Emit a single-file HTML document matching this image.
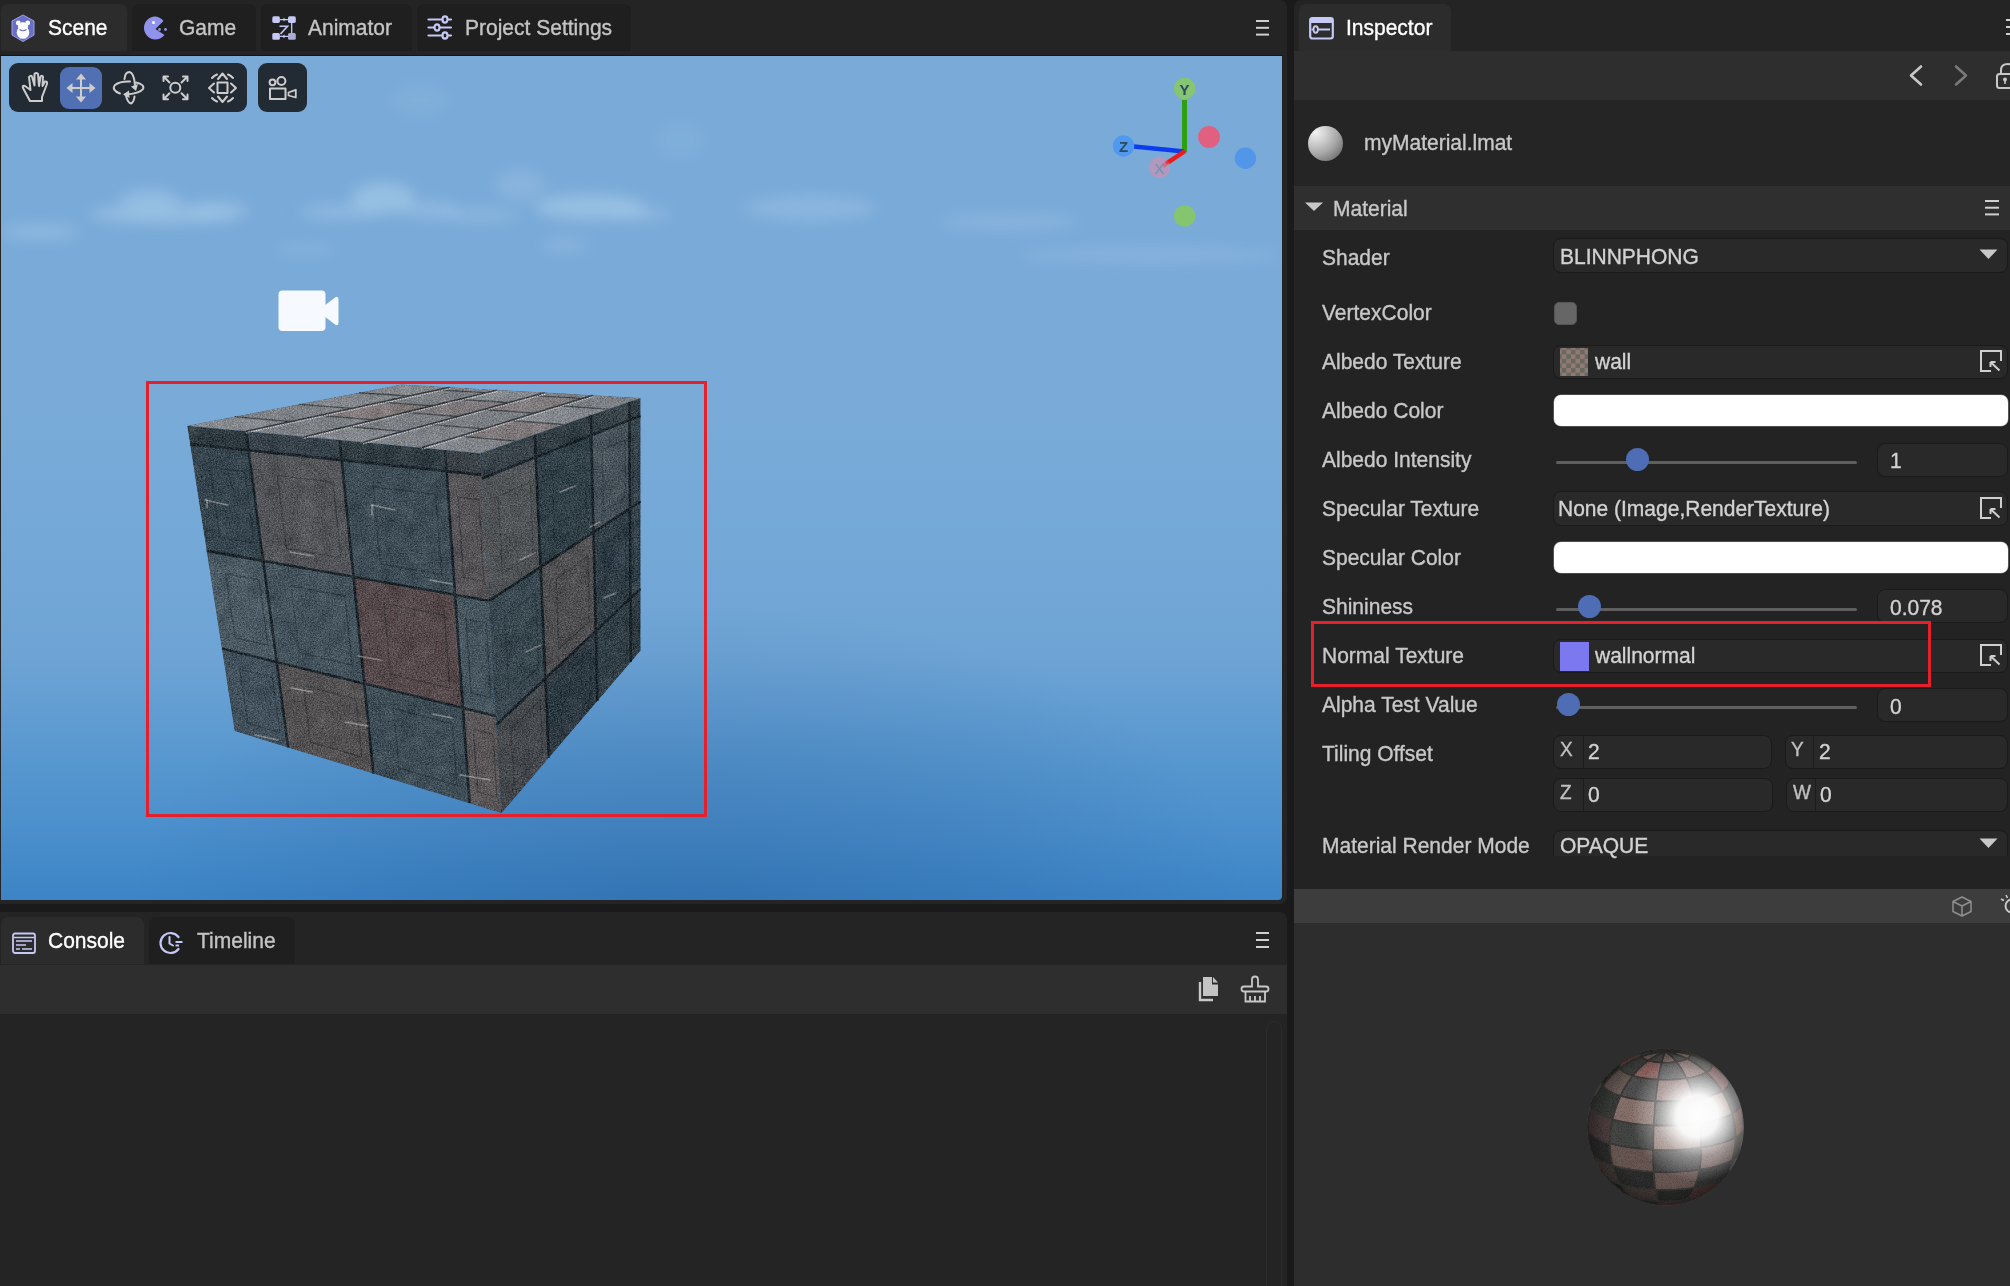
<!DOCTYPE html>
<html><head><meta charset="utf-8">
<style>
*{box-sizing:border-box}
html,body{margin:0;padding:0}
body{width:2010px;height:1286px;background:#1a1a1a;position:relative;overflow:hidden;font-family:"Liberation Sans",sans-serif;font-size:21px;color:#c8c8c8;-webkit-text-stroke:0.35px currentColor}
.abs{position:absolute}
.t,.tx{will-change:transform;transform:scaleY(1.06);transform-origin:0 19.3px}
.panel{position:absolute;background:#242424;overflow:hidden}
.tab{position:absolute;top:4px;height:47px;background:#1f1f1f;border-radius:7px 7px 0 0;color:#c4c4c4;font-size:21px;line-height:47px;white-space:nowrap}
.tab.on{background:#2c2c2c;color:#fff}
.tab .tx{position:absolute;top:-1px}
.ic{position:absolute}
.lbl{position:absolute;left:28px;font-size:21px;color:#c8c8c8;line-height:24px;white-space:nowrap}
.t{position:absolute;font-size:21px;line-height:24px;white-space:nowrap;color:#c8c8c8}
.f{position:absolute;background:#292929;border:1px solid #1a1a1a;border-radius:8px}
.tex{background:repeating-conic-gradient(#927a72 0 25%,#666862 0 50%) 1.7px 1.7px/9.2px 9.2px}
.ntex{background:#7b78f0}
</style></head>
<body>

<!-- TOP LEFT PANEL -->
<div class="panel" style="left:0;top:0;width:1287px;height:904px;border-radius:0 7px 7px 0">
  <div class="tab on" style="left:1px;width:126px"><span class="tx" style="left:47px">Scene</span></div>
  <div class="tab" style="left:132px;width:124px"><span class="tx" style="left:47.2px">Game</span></div>
  <div class="tab" style="left:261px;width:151px"><span class="tx" style="left:47px">Animator</span></div>
  <div class="tab" style="left:417px;width:214px"><span class="tx" style="left:48px">Project Settings</span></div>
  <div class="abs" style="left:0;top:55px;width:1283px;height:1px;background:#151515"></div>
  <!-- viewport -->
  <div id="vp" class="abs" style="left:1px;top:56px;width:1281px;height:844px;overflow:hidden;border-radius:0 0 4px 0;background:radial-gradient(ellipse 560px 300px at 690px 850px,rgba(30,80,140,0.32),rgba(30,80,140,0.18) 50%,rgba(30,80,140,0) 100%),linear-gradient(180deg,#7aabd8 0px,#7aabd8 340px,#74a8d7 480px,#6ea4d5 598px,#5797cf 706px,#4a8fcc 777px,#3c84c6 844px)">
  </div>
<!--VP-->
<svg class="abs" style="left:0;top:0" width="1287" height="904" viewBox="0 0 1287 904">
<defs>
 <clipPath id="vpc"><rect x="1" y="56" width="1281" height="844" rx="0"/></clipPath>
 <filter id="blur6" x="-50%" y="-50%" width="200%" height="200%"><feGaussianBlur stdDeviation="7"/></filter>
 <filter id="blur3" x="-50%" y="-50%" width="200%" height="200%"><feGaussianBlur stdDeviation="3"/></filter>
 <filter id="noise" x="0" y="0" width="100%" height="100%" color-interpolation-filters="sRGB">
   <feTurbulence type="fractalNoise" baseFrequency="0.75" numOctaves="2" seed="4" result="n1"/>
   <feTurbulence type="fractalNoise" baseFrequency="0.06" numOctaves="3" seed="9" result="n2"/>
   <feComposite in="n1" in2="n2" operator="arithmetic" k2="0.8" k3="0.2" result="n"/>
   <feColorMatrix in="n" type="matrix" values="1 0 0 0 0  1 0 0 0 0  1 0 0 0 0  0 0 0 0 1" result="g"/>
   <feComposite in="SourceGraphic" in2="g" operator="arithmetic" k2="1" k3="0.5" k4="-0.25" result="m"/>
   <feComposite in="m" in2="SourceAlpha" operator="in"/>
 </filter>
 <linearGradient id="rshade" x1="0" y1="0" x2="0.3" y2="1">
   <stop offset="0" stop-color="#000" stop-opacity="0"/>
   <stop offset="1" stop-color="#000" stop-opacity="0.12"/>
 </linearGradient>
 <radialGradient id="botdark" cx="0.45" cy="1.05" r="0.6">
   <stop offset="0" stop-color="#2f6fae" stop-opacity="0.55"/>
   <stop offset="1" stop-color="#2f6fae" stop-opacity="0"/>
 </radialGradient>
 <radialGradient id="rlight" cx="0.5" cy="0.5" r="0.5">
   <stop offset="0" stop-color="#8cbbe6" stop-opacity="0.45"/>
   <stop offset="1" stop-color="#8cbbe6" stop-opacity="0"/>
 </radialGradient>
</defs>
<g clip-path="url(#vpc)">
 
 
 <g fill="#a9cbea" filter="url(#blur6)">
  <ellipse cx="165" cy="214" rx="75" ry="10" opacity="0.55"/>
  <ellipse cx="150" cy="200" rx="30" ry="12" opacity="0.45"/>
  <ellipse cx="220" cy="210" rx="30" ry="10" opacity="0.35"/>
  <ellipse cx="383" cy="198" rx="32" ry="16" opacity="0.6"/>
  <ellipse cx="340" cy="212" rx="40" ry="8" opacity="0.4"/>
  <ellipse cx="430" cy="210" rx="30" ry="9" opacity="0.4"/>
  <ellipse cx="520" cy="185" rx="25" ry="16" opacity="0.3"/>
  <ellipse cx="590" cy="207" rx="55" ry="13" opacity="0.6"/>
  <ellipse cx="640" cy="214" rx="30" ry="7" opacity="0.4"/>
  <ellipse cx="480" cy="215" rx="40" ry="7" opacity="0.35"/>
  <ellipse cx="565" cy="245" rx="22" ry="8" opacity="0.3"/>
  <ellipse cx="305" cy="250" rx="30" ry="5" opacity="0.3"/>
  <ellipse cx="420" cy="100" rx="30" ry="16" opacity="0.12"/>
  <ellipse cx="680" cy="140" rx="26" ry="20" opacity="0.1"/>
  <ellipse cx="810" cy="208" rx="65" ry="13" opacity="0.35"/>
  <ellipse cx="1010" cy="222" rx="70" ry="8" opacity="0.3"/>
  <ellipse cx="1150" cy="255" rx="130" ry="7" opacity="0.3"/>
  <ellipse cx="40" cy="232" rx="40" ry="8" opacity="0.4"/>
  </g>
 <!-- cube -->
 <g filter="url(#noise)">
<polygon points="187.3,425.8 245.9,431.3 248.4,450.3 190.1,444.1" fill="#303b42"/>
<polygon points="245.9,431.3 339.7,440.1 341.7,460.1 248.4,450.3" fill="#37424a"/>
<polygon points="339.7,440.1 445.1,450.0 446.6,471.2 341.7,460.1" fill="#303b42"/>
<polygon points="445.1,450.0 480.3,453.3 481.6,474.9 446.6,471.2" fill="#3a4247"/>
<polygon points="190.1,444.1 248.4,450.3 263.2,560.9 206.7,550.9" fill="#35444d"/>
<polygon points="248.4,450.3 341.7,460.1 353.5,576.9 263.2,560.9" fill="#535457"/>
<polygon points="341.7,460.1 446.6,471.2 455.1,594.8 353.5,576.9" fill="#3e4c55"/>
<polygon points="446.6,471.2 481.6,474.9 489.0,600.8 455.1,594.8" fill="#565457"/>
<polygon points="206.7,550.9 263.2,560.9 276.7,662.1 221.9,648.6" fill="#4b5a63"/>
<polygon points="263.2,560.9 353.5,576.9 364.3,683.6 276.7,662.1" fill="#43525b"/>
<polygon points="353.5,576.9 455.1,594.8 462.9,707.8 364.3,683.6" fill="#56494b"/>
<polygon points="455.1,594.8 489.0,600.8 495.8,715.9 462.9,707.8" fill="#45545d"/>
<polygon points="221.9,648.6 276.7,662.1 288.1,747.4 234.7,731.0" fill="#41505a"/>
<polygon points="276.7,662.1 364.3,683.6 373.4,773.6 288.1,747.4" fill="#545153"/>
<polygon points="364.3,683.6 462.9,707.8 469.5,803.2 373.4,773.6" fill="#3e4d56"/>
<polygon points="462.9,707.8 495.8,715.9 501.5,813.0 469.5,803.2" fill="#5a5557"/>
<line x1="245.9" y1="431.3" x2="288.1" y2="747.4" stroke="#1c262c" stroke-width="2.6"/>
<line x1="339.7" y1="440.1" x2="373.4" y2="773.6" stroke="#1c262c" stroke-width="2.6"/>
<line x1="445.1" y1="450.0" x2="469.5" y2="803.2" stroke="#1c262c" stroke-width="2.6"/>
<line x1="190.1" y1="444.1" x2="481.6" y2="474.9" stroke="#1c262c" stroke-width="2.6"/>
<line x1="206.7" y1="550.9" x2="489.0" y2="600.8" stroke="#1c262c" stroke-width="2.6"/>
<line x1="221.9" y1="648.6" x2="495.8" y2="715.9" stroke="#1c262c" stroke-width="2.6"/>
<polygon points="480.3,453.3 534.8,434.5 535.7,457.1 481.8,478.5" fill="#3a444b"/>
<polygon points="534.8,434.5 590.8,415.1 591.3,435.1 535.7,457.1" fill="#343f46"/>
<polygon points="590.8,415.1 629.3,401.9 629.4,420.1 591.3,435.1" fill="#39434a"/>
<polygon points="629.3,401.9 640.5,398.0 640.5,415.7 629.4,420.1" fill="#343f46"/>
<polygon points="481.8,478.5 535.7,457.1 540.5,567.0 489.0,600.8" fill="#535659"/>
<polygon points="535.7,457.1 591.3,435.1 593.5,532.3 540.5,567.0" fill="#34434b"/>
<polygon points="591.3,435.1 629.4,420.1 629.9,508.5 593.5,532.3" fill="#4a555d"/>
<polygon points="629.4,420.1 640.5,415.7 640.5,501.5 629.9,508.5" fill="#39474f"/>
<polygon points="489.0,600.8 540.5,567.0 545.3,678.6 496.3,724.9" fill="#3d4c55"/>
<polygon points="540.5,567.0 593.5,532.3 595.8,630.9 545.3,678.6" fill="#555456"/>
<polygon points="593.5,532.3 629.9,508.5 630.4,598.2 595.8,630.9" fill="#34424b"/>
<polygon points="629.9,508.5 640.5,501.5 640.5,588.6 630.4,598.2" fill="#3a4851"/>
<polygon points="496.3,724.9 545.3,678.6 548.8,757.8 501.5,813.0" fill="#4d5156"/>
<polygon points="545.3,678.6 595.8,630.9 597.4,700.9 548.8,757.8" fill="#323f48"/>
<polygon points="595.8,630.9 630.4,598.2 630.8,661.9 597.4,700.9" fill="#38464e"/>
<polygon points="630.4,598.2 640.5,588.6 640.5,650.5 630.8,661.9" fill="#364249"/>
<line x1="534.8" y1="434.5" x2="548.8" y2="757.8" stroke="#1c262c" stroke-width="2.6"/>
<line x1="590.8" y1="415.1" x2="597.4" y2="700.9" stroke="#1c262c" stroke-width="2.6"/>
<line x1="629.3" y1="401.9" x2="630.8" y2="661.9" stroke="#1c262c" stroke-width="2.6"/>
<line x1="481.8" y1="478.5" x2="640.5" y2="415.7" stroke="#1c262c" stroke-width="2.6"/>
<line x1="489.0" y1="600.8" x2="640.5" y2="501.5" stroke="#1c262c" stroke-width="2.6"/>
<line x1="496.3" y1="724.9" x2="640.5" y2="588.6" stroke="#1c262c" stroke-width="2.6"/>
<polygon points="209.7,467.4 244.4,471.6 254.2,543.2 220.1,537.5" fill="none" stroke="#1e282d" stroke-width="1.2" opacity="0.45"/>
<polygon points="277.3,475.5 332.9,482.1 340.8,557.5 286.4,548.5" fill="none" stroke="#1e282d" stroke-width="1.2" opacity="0.45"/>
<polygon points="373.2,486.9 435.8,494.4 441.6,574.2 380.3,564.1" fill="none" stroke="#1e282d" stroke-width="1.2" opacity="0.45"/>
<polygon points="458.0,497.1 478.9,499.6 483.8,581.2 463.4,577.8" fill="none" stroke="#1e282d" stroke-width="1.2" opacity="0.45"/>
<polygon points="225.5,573.5 259.1,579.9 268.0,645.3 235.0,637.6" fill="none" stroke="#1e282d" stroke-width="1.2" opacity="0.45"/>
<polygon points="291.0,585.9 344.9,596.1 352.1,665.1 299.3,652.7" fill="none" stroke="#1e282d" stroke-width="1.2" opacity="0.45"/>
<polygon points="384.0,603.6 444.6,615.1 449.9,688.1 390.4,674.1" fill="none" stroke="#1e282d" stroke-width="1.2" opacity="0.45"/>
<polygon points="466.1,619.2 486.3,623.0 490.8,697.7 471.0,693.0" fill="none" stroke="#1e282d" stroke-width="1.2" opacity="0.45"/>
<polygon points="239.7,669.0 272.4,677.4 279.9,732.7 247.8,723.1" fill="none" stroke="#1e282d" stroke-width="1.2" opacity="0.45"/>
<polygon points="303.4,685.4 355.7,698.9 361.8,757.1 310.4,741.7" fill="none" stroke="#1e282d" stroke-width="1.2" opacity="0.45"/>
<polygon points="393.6,708.7 452.5,723.8 456.9,785.4 399.1,768.2" fill="none" stroke="#1e282d" stroke-width="1.2" opacity="0.45"/>
<polygon points="473.4,729.2 493.0,734.3 496.8,797.3 477.5,791.5" fill="none" stroke="#1e282d" stroke-width="1.2" opacity="0.45"/>
<polygon points="498.2,496.3 530.3,482.0 533.6,554.4 502.4,573.5" fill="none" stroke="#1e282d" stroke-width="1.2" opacity="0.35"/>
<polygon points="552.1,472.2 585.1,457.5 586.8,521.7 554.7,541.4" fill="none" stroke="#1e282d" stroke-width="1.2" opacity="0.35"/>
<polygon points="602.3,449.9 625.0,439.8 625.4,497.9 603.5,511.4" fill="none" stroke="#1e282d" stroke-width="1.2" opacity="0.35"/>
<polygon points="632.6,436.4 639.2,433.4 639.2,489.4 632.8,493.4" fill="none" stroke="#1e282d" stroke-width="1.2" opacity="0.35"/>
<polygon points="504.7,615.4 535.3,593.7 538.7,667.2 509.0,693.8" fill="none" stroke="#1e282d" stroke-width="1.2" opacity="0.35"/>
<polygon points="556.2,578.9 587.7,556.5 589.4,621.6 558.8,649.0" fill="none" stroke="#1e282d" stroke-width="1.2" opacity="0.35"/>
<polygon points="604.1,544.8 625.7,529.5 626.1,588.5 605.2,607.3" fill="none" stroke="#1e282d" stroke-width="1.2" opacity="0.35"/>
<polygon points="632.9,524.3 639.2,519.8 639.3,576.7 633.2,582.2" fill="none" stroke="#1e282d" stroke-width="1.2" opacity="0.35"/>
<polygon points="511.0,729.0 540.2,700.2 542.5,752.3 514.0,784.7" fill="none" stroke="#1e282d" stroke-width="1.2" opacity="0.35"/>
<polygon points="560.0,680.5 590.1,650.8 591.3,697.0 561.9,730.3" fill="none" stroke="#1e282d" stroke-width="1.2" opacity="0.35"/>
<polygon points="605.7,635.4 626.4,615.0 626.7,656.9 606.6,679.7" fill="none" stroke="#1e282d" stroke-width="1.2" opacity="0.35"/>
<polygon points="633.3,608.1 639.3,602.2 639.3,642.6 633.5,649.2" fill="none" stroke="#1e282d" stroke-width="1.2" opacity="0.35"/>
<polygon points="187.3,425.8 234.5,416.7 290.7,421.6 245.9,431.3" fill="#83878b"/>
<polygon points="234.5,416.7 298.9,404.3 351.9,408.4 290.7,421.6" fill="#7d8186"/>
<polygon points="298.9,404.3 359.1,392.8 408.9,396.0 351.9,408.4" fill="#83878b"/>
<polygon points="359.1,392.8 402.0,384.5 449.7,387.2 408.9,396.0" fill="#83878b"/>
<line x1="234.5" y1="416.7" x2="290.7" y2="421.6" stroke="#454a4e" stroke-width="1.3"/>
<line x1="298.9" y1="404.3" x2="351.9" y2="408.4" stroke="#454a4e" stroke-width="1.3"/>
<line x1="359.1" y1="392.8" x2="408.9" y2="396.0" stroke="#454a4e" stroke-width="1.3"/>
<polygon points="245.9,431.3 319.3,415.4 373.9,419.9 304.5,436.8" fill="#7d8186"/>
<polygon points="319.3,415.4 380.4,402.2 431.8,405.8 373.9,419.9" fill="#82797b"/>
<polygon points="380.4,402.2 437.5,389.8 485.8,392.7 431.8,405.8" fill="#7b7f84"/>
<polygon points="437.5,389.8 449.7,387.2 497.4,389.9 485.8,392.7" fill="#7d8186"/>
<line x1="319.3" y1="415.4" x2="373.9" y2="419.9" stroke="#454a4e" stroke-width="1.3"/>
<line x1="380.4" y1="402.2" x2="431.8" y2="405.8" stroke="#454a4e" stroke-width="1.3"/>
<line x1="437.5" y1="389.8" x2="485.8" y2="392.7" stroke="#454a4e" stroke-width="1.3"/>
<polygon points="304.5,436.8 346.9,426.5 403.1,431.4 363.1,442.3" fill="#83878b"/>
<polygon points="346.9,426.5 404.8,412.4 457.7,416.5 403.1,431.4" fill="#7b7f84"/>
<polygon points="404.8,412.4 458.8,399.3 508.7,402.5 457.7,416.5" fill="#7f7a7c"/>
<polygon points="458.8,399.3 497.4,389.9 545.1,392.6 508.7,402.5" fill="#83878b"/>
<line x1="346.9" y1="426.5" x2="403.1" y2="431.4" stroke="#454a4e" stroke-width="1.3"/>
<line x1="404.8" y1="412.4" x2="457.7" y2="416.5" stroke="#454a4e" stroke-width="1.3"/>
<line x1="458.8" y1="399.3" x2="508.7" y2="402.5" stroke="#454a4e" stroke-width="1.3"/>
<polygon points="363.1,442.3 428.6,424.4 483.3,428.9 421.7,447.8" fill="#7e8287"/>
<polygon points="428.6,424.4 483.2,409.5 534.6,413.2 483.3,428.9" fill="#7b7f84"/>
<polygon points="483.2,409.5 534.2,395.6 582.5,398.4 534.6,413.2" fill="#7f7a7c"/>
<polygon points="534.2,395.6 545.1,392.6 592.8,395.3 582.5,398.4" fill="#7d8186"/>
<line x1="428.6" y1="424.4" x2="483.3" y2="428.9" stroke="#454a4e" stroke-width="1.3"/>
<line x1="483.2" y1="409.5" x2="534.6" y2="413.2" stroke="#454a4e" stroke-width="1.3"/>
<line x1="534.2" y1="395.6" x2="582.5" y2="398.4" stroke="#454a4e" stroke-width="1.3"/>
<polygon points="421.7,447.8 459.3,436.2 515.5,441.1 480.3,453.3" fill="#81858a"/>
<polygon points="459.3,436.2 510.7,420.5 563.6,424.5 515.5,441.1" fill="#7f787a"/>
<polygon points="510.7,420.5 558.6,405.8 608.5,409.1 563.6,424.5" fill="#83878b"/>
<polygon points="558.6,405.8 592.8,395.3 640.5,398.0 608.5,409.1" fill="#7b7f84"/>
<line x1="459.3" y1="436.2" x2="515.5" y2="441.1" stroke="#454a4e" stroke-width="1.3"/>
<line x1="510.7" y1="420.5" x2="563.6" y2="424.5" stroke="#454a4e" stroke-width="1.3"/>
<line x1="558.6" y1="405.8" x2="608.5" y2="409.1" stroke="#454a4e" stroke-width="1.3"/>
<line x1="245.9" y1="431.3" x2="449.7" y2="387.2" stroke="#343a3e" stroke-width="1.5"/>
<line x1="245.9" y1="431.3" x2="449.7" y2="387.2" stroke="#e6e6e8" stroke-width="1.2" opacity="0.7" stroke-dasharray="1.5 1" transform="translate(0,1.5)"/>
<line x1="304.5" y1="436.8" x2="497.4" y2="389.9" stroke="#343a3e" stroke-width="1.5"/>
<line x1="304.5" y1="436.8" x2="497.4" y2="389.9" stroke="#e6e6e8" stroke-width="1.2" opacity="0.7" stroke-dasharray="1.5 1" transform="translate(0,1.5)"/>
<line x1="363.1" y1="442.3" x2="545.1" y2="392.6" stroke="#343a3e" stroke-width="1.5"/>
<line x1="363.1" y1="442.3" x2="545.1" y2="392.6" stroke="#e6e6e8" stroke-width="1.2" opacity="0.7" stroke-dasharray="1.5 1" transform="translate(0,1.5)"/>
<line x1="421.7" y1="447.8" x2="592.8" y2="395.3" stroke="#343a3e" stroke-width="1.5"/>
<line x1="421.7" y1="447.8" x2="592.8" y2="395.3" stroke="#e6e6e8" stroke-width="1.2" opacity="0.7" stroke-dasharray="1.5 1" transform="translate(0,1.5)"/>
<line x1="205" y1="500" x2="228" y2="505" stroke="#e8e0dc" stroke-width="1.6" stroke-linecap="round" opacity="0.4"/>
<line x1="207" y1="500" x2="207" y2="508" stroke="#e8e0dc" stroke-width="1.6" stroke-linecap="round" opacity="0.4"/>
<line x1="290" y1="552" x2="313" y2="556" stroke="#e8e0dc" stroke-width="1.6" stroke-linecap="round" opacity="0.4"/>
<line x1="372" y1="505" x2="395" y2="510" stroke="#e8e0dc" stroke-width="1.6" stroke-linecap="round" opacity="0.4"/>
<line x1="372" y1="505" x2="372" y2="515" stroke="#e8e0dc" stroke-width="1.6" stroke-linecap="round" opacity="0.4"/>
<line x1="430" y1="580" x2="452" y2="584" stroke="#e8e0dc" stroke-width="1.6" stroke-linecap="round" opacity="0.4"/>
<line x1="255" y1="735" x2="278" y2="740" stroke="#e8e0dc" stroke-width="1.6" stroke-linecap="round" opacity="0.4"/>
<line x1="291" y1="688" x2="312" y2="692" stroke="#e8e0dc" stroke-width="1.6" stroke-linecap="round" opacity="0.4"/>
<line x1="345" y1="722" x2="368" y2="726" stroke="#e8e0dc" stroke-width="1.6" stroke-linecap="round" opacity="0.4"/>
<line x1="358" y1="656" x2="380" y2="660" stroke="#e8e0dc" stroke-width="1.6" stroke-linecap="round" opacity="0.4"/>
<line x1="432" y1="714" x2="452" y2="718" stroke="#e8e0dc" stroke-width="1.6" stroke-linecap="round" opacity="0.4"/>
<line x1="460" y1="775" x2="490" y2="780" stroke="#e8e0dc" stroke-width="1.6" stroke-linecap="round" opacity="0.4"/>
<line x1="560" y1="492" x2="575" y2="486" stroke="#e8e0dc" stroke-width="1.6" stroke-linecap="round" opacity="0.4"/>
<line x1="520" y1="560" x2="535" y2="553" stroke="#e8e0dc" stroke-width="1.6" stroke-linecap="round" opacity="0.4"/>
<line x1="526" y1="652" x2="541" y2="645" stroke="#e8e0dc" stroke-width="1.6" stroke-linecap="round" opacity="0.4"/>
<line x1="590" y1="527" x2="600" y2="522" stroke="#e8e0dc" stroke-width="1.6" stroke-linecap="round" opacity="0.4"/>
<line x1="604" y1="598" x2="616" y2="593" stroke="#e8e0dc" stroke-width="1.6" stroke-linecap="round" opacity="0.4"/>
<polygon points="480.3,453.3 640.5,398.0 640.5,650.5 501.5,813.0" fill="url(#rshade)"/>
 </g>
 <!-- camera -->
 <rect x="278.5" y="290.5" width="47" height="40.5" rx="4" fill="#f6f9ff"/>
 <path d="M324,306 L335,297.5 Q338.5,295.5 338.5,299.5 L338.5,322.5 Q338.5,326.5 335,324.5 L324,316 Z" fill="#f6f9ff"/>
 <!-- red selection rect -->
 <rect x="147.5" y="382.5" width="558" height="433" fill="none" stroke="#e3202c" stroke-width="3"/>
 <!-- gizmo -->
 <line x1="1184.5" y1="100" x2="1184.5" y2="152" stroke="#2ea010" stroke-width="5"/>
 <line x1="1134" y1="146.5" x2="1184" y2="151.5" stroke="#0b3cf0" stroke-width="4.5"/>
 <line x1="1163" y1="166" x2="1185" y2="151" stroke="#ee1c1c" stroke-width="4.5"/>
 <circle cx="1184.6" cy="88.5" r="10.7" fill="#86c572"/>
 <circle cx="1123.5" cy="146" r="10.7" fill="#4f99ef"/>
 <circle cx="1159.5" cy="167.5" r="10.7" fill="#c890b4" opacity="0.7"/>
 <circle cx="1209" cy="137" r="10.9" fill="#e2607f"/>
 <circle cx="1245.4" cy="158.3" r="10.7" fill="#5196e9"/>
 <circle cx="1184.6" cy="216" r="10.7" fill="#85c56d"/>
 <text x="1184.6" y="94.5" font-family="Liberation Sans" font-weight="bold" font-size="15" fill="#2d4a62" text-anchor="middle">Y</text>
 <text x="1123.5" y="152" font-family="Liberation Sans" font-weight="bold" font-size="15" fill="#2d4a62" text-anchor="middle">Z</text>
 <text x="1159.5" y="173.5" font-family="Liberation Sans" font-size="15" fill="#6f92aa" text-anchor="middle">X</text>
 <line x1="1166" y1="163" x2="1184" y2="151.5" stroke="#ee1c1c" stroke-width="3.5" opacity="0.6"/>
 <!-- toolbar -->
 <rect x="9" y="63" width="238" height="49" rx="9" fill="#222a34"/>
 <rect x="60" y="67" width="42" height="42" rx="9" fill="#5170b4"/>
 <rect x="258" y="63" width="49" height="49" rx="9" fill="#222a34"/>
 <g fill="none" stroke="#cdcdcd" stroke-width="2" stroke-linecap="round" stroke-linejoin="round">
  <!-- hand -->
  <path d="M30,101 L42,101 L42,97 L47,84 Q47.5,81 45,81.5 L42.5,86 L43,77 Q42.5,75 40.5,76.5 L39,86 L38,74 Q36,72 34.5,74 L34.5,85.5 L32,76.5 Q30.5,75 29,77 L30.5,90 L25,86 Q22,85 23,88 Z"/>
  <!-- move -->
  <path d="M81,78 L81,98 M71,88 L91,88"/>
  <!-- scale -->
  <circle cx="175.3" cy="87.8" r="5"/>
  <path d="M163.5,81 L163.5,76.5 L168,76.5 M163.5,76.5 L169.5,82.5 M187.5,81 L187.5,76.5 L183,76.5 M187.5,76.5 L181.5,82.5 M163.5,94.5 L163.5,99.3 L168,99.3 M163.5,99.3 L169.5,93.3 M187.5,94.5 L187.5,99.3 L183,99.3 M187.5,99.3 L181.5,93.3"/>
  <!-- rect tool -->
  <rect x="217.5" y="82.5" width="10" height="10.5"/>
  <path d="M218,79 L222.5,73.5 L227,79 M218,96.5 L222.5,102 L227,96.5 M214,83.5 L209,88 L214,92.5 M231,83.5 L236,88 L231,92.5"/>
  <path d="M212,78 A14,14 0 0 1 217,74.5 M228,74.5 A14,14 0 0 1 233,78 M212,98 A14,14 0 0 0 217,101.5 M228,101.5 A14,14 0 0 0 233,98"/>
  <!-- rotate -->
  <path d="M120,93.5 Q111,90 115,85 Q120,81 130,81.5"/>
  <path d="M136,82.5 Q145,84.5 143,89 Q140,93.5 125,94.5"/>
  <path d="M124.5,79 Q125,72 129.5,72 Q134,73 135,85"/>
  <path d="M126,96 Q128,103 131,103.5 Q134,102 134.5,96.5"/>
  <!-- cam people -->
  <circle cx="272.5" cy="82.3" r="2.9"/>
  <circle cx="281.4" cy="81" r="4"/>
  <rect x="270" y="88.5" width="15.5" height="10.5"/>
  <path d="M288.5,92.5 L295.8,89.8 L295.8,97.5 L288.5,95.5 Z" stroke-width="1.8"/>
 </g>
 <g fill="#cdcdcd">
  <path d="M81,73.5 L86,79.5 L76,79.5 Z M81,102.5 L86,96.5 L76,96.5 Z M66.5,88 L72.5,83 L72.5,93 Z M95.5,88 L89.5,83 L89.5,93 Z"/>
  <path d="M131,86.5 L138,84 L136,91 Z"/>
  <path d="M123,94.5 L129,90.5 L129.5,98 Z"/>
 </g>
</g>
</svg>
<!--/VP-->
</div>

<!-- BOTTOM LEFT PANEL -->
<div class="panel" style="left:0;top:912px;width:1287px;height:374px;border-radius:0 7px 0 0">
  <div class="tab on" style="left:1px;top:5px;width:143px"><span class="tx" style="left:47px">Console</span></div>
  <div class="tab" style="left:149px;top:5px;width:146px"><span class="tx" style="left:48px">Timeline</span></div>
  <div class="abs" style="left:0;top:53px;width:1287px;height:49px;background:#2e2e2e"></div>
</div>

<!-- RIGHT PANEL -->
<div class="panel" style="left:1294px;top:0;width:716px;height:1286px;border-radius:7px 0 0 0">
  <div class="tab on" style="left:5px;top:4px;width:152px"><span class="tx" style="left:47px">Inspector</span></div>
  <div class="abs" style="left:0;top:51px;width:716px;height:49px;background:#2e2e2e"></div>
  <div class="abs" style="left:0;top:100px;width:716px;height:86px;background:#252525"></div>
  <div class="abs" style="left:0;top:186px;width:716px;height:44px;background:#2f2f2f"></div>
  <div class="abs" style="left:0;top:230px;width:716px;height:659px;background:#232323"></div>
  <div class="abs" style="left:0;top:889px;width:716px;height:34px;background:#3d3d3d"></div>
  <div class="abs" style="left:0;top:923px;width:716px;height:363px;background:#2d2d2d"></div>
</div>

<!--INSP-->
<svg class="abs" style="left:1308px;top:16px" width="28" height="26" viewBox="0 0 28 26"><rect x="2.2" y="2" width="22.6" height="20.5" rx="2.2" fill="none" stroke="#c6c8f6" stroke-width="2.2"/><rect x="2.2" y="2" width="22.6" height="5" rx="1.5" fill="#c6c8f6"/><path d="M10,13.5 L22,13.5" stroke="#c6c8f6" stroke-width="2"/><path d="M3.5,13.5 L5.5,13.5" stroke="#c6c8f6" stroke-width="1.6"/><ellipse cx="7.7" cy="13.5" rx="2.2" ry="3.2" fill="none" stroke="#c6c8f6" stroke-width="1.9"/></svg>
<div class="abs" style="left:2005.5px;top:19px;width:10px;height:2px;background:#d0d0d0;box-shadow:0 7px 0 #d0d0d0,0 14px 0 #d0d0d0"></div>
<svg class="abs" style="left:1900px;top:60px" width="110" height="32" viewBox="1900 60 110 32"><path d="M1921,66.5 L1911,75.5 L1921,84.5" fill="none" stroke="#c8c8c8" stroke-width="2.6" stroke-linecap="round" stroke-linejoin="round"/><path d="M1956,66.5 L1966,75.5 L1956,84.5" fill="none" stroke="#7a7a7a" stroke-width="2.6" stroke-linecap="round" stroke-linejoin="round"/><rect x="1997" y="74" width="20" height="14" rx="2.5" fill="none" stroke="#c8c8c8" stroke-width="2"/><path d="M2001,74 L2001,70 Q2001,64 2008,64 Q2014,64 2014,70" fill="none" stroke="#c8c8c8" stroke-width="2"/><circle cx="2005" cy="79.5" r="2" fill="#c8c8c8"/><rect x="2004.2" y="80" width="1.6" height="4" fill="#c8c8c8"/></svg>
<div class="abs" style="left:1307.5px;top:126px;width:35px;height:35px;border-radius:50%;background:radial-gradient(circle at 22% 18%,#f0f0f0 0%,#d6d6d6 22%,#a8a8a8 55%,#707070 85%,#4e4e4e 100%)"></div>
<div class="t" style="left:1364.0px;top:131.2px;color:#c8c8c8;font-size:21px;">myMaterial.lmat</div>
<svg class="abs" style="left:1303px;top:200px" width="22" height="14" viewBox="0 0 22 14"><path d="M2,2.5 L20,2.5 L11,11 Z" fill="#c8c8c8"/></svg>
<div class="t" style="left:1333.0px;top:196.7px;color:#c8c8c8;font-size:21px;">Material</div>
<div class="abs" style="left:1985px;top:199.5px;width:13.5px;height:2.2px;background:#d0d0d0;box-shadow:0 6.7px 0 #d0d0d0,0 13.4px 0 #d0d0d0"></div>
<div class="t" style="left:1322.0px;top:245.7px;color:#c8c8c8;font-size:21px;">Shader</div>
<div class="t" style="left:1322.0px;top:300.7px;color:#c8c8c8;font-size:21px;">VertexColor</div>
<div class="t" style="left:1322.0px;top:349.7px;color:#c8c8c8;font-size:21px;">Albedo Texture</div>
<div class="t" style="left:1322.0px;top:398.7px;color:#c8c8c8;font-size:21px;">Albedo Color</div>
<div class="t" style="left:1322.0px;top:447.7px;color:#c8c8c8;font-size:21px;">Albedo Intensity</div>
<div class="t" style="left:1322.0px;top:496.7px;color:#c8c8c8;font-size:21px;">Specular Texture</div>
<div class="t" style="left:1322.0px;top:545.7px;color:#c8c8c8;font-size:21px;">Specular Color</div>
<div class="t" style="left:1322.0px;top:594.7px;color:#c8c8c8;font-size:21px;">Shininess</div>
<div class="t" style="left:1322.0px;top:643.7px;color:#c8c8c8;font-size:21px;">Normal Texture</div>
<div class="t" style="left:1322.0px;top:692.7px;color:#c8c8c8;font-size:21px;">Alpha Test Value</div>
<div class="t" style="left:1322.0px;top:741.7px;color:#c8c8c8;font-size:21px;">Tiling Offset</div>
<div class="t" style="left:1322.0px;top:834.2px;color:#c8c8c8;font-size:21px;">Material Render Mode</div>
<div class="f" style="left:1553.0px;top:238.0px;width:455.0px;height:35.0px;"></div>
<div class="t" style="left:1560.0px;top:245.2px;color:#d2d2d2;font-size:21px;">BLINNPHONG</div>
<svg class="abs" style="left:1978px;top:248px" width="22" height="14" viewBox="0 0 22 14"><path d="M1.5,1.5 L19.5,1.5 L10.5,11 Z" fill="#c8c8c8"/></svg>
<div class="abs" style="left:1554px;top:302px;width:23px;height:23px;border-radius:5px;background:#666666;border:1px solid #555"></div>
<div class="f" style="left:1553.0px;top:344.5px;width:455.0px;height:34.5px;"></div>
<div class="abs tex" style="left:1560px;top:347.5px;width:28px;height:28.5px"></div>
<div class="t" style="left:1594.5px;top:349.7px;color:#d2d2d2;font-size:21px;">wall</div>
<svg class="abs" style="left:1978.5px;top:349px" width="26" height="26" viewBox="0 0 26 26"><path d="M12,22 L2,22 L2,2 L22,2 L22,12" fill="none" stroke="#cfcfcf" stroke-width="2"/><path d="M11.5,13 L11.5,18 M11.5,13 L16.5,13 M12,13.5 L20.5,21.5" fill="none" stroke="#cfcfcf" stroke-width="2"/></svg>
<div class="abs" style="left:1553.5px;top:394.8px;width:454.5px;height:31.4px;border-radius:7px;background:#fff;box-shadow:0 0 0 0.6px #777"></div>
<div class="abs" style="left:1556px;top:460.5px;width:301px;height:3px;background:#5f5f5f;border-radius:1.5px"></div>
<div class="abs" style="left:1625.5px;top:448.0px;width:23px;height:23px;border-radius:50%;background:#4e6db4"></div>
<div class="f" style="left:1877.0px;top:442.5px;width:131.0px;height:34.0px;"></div>
<div class="t" style="left:1889.5px;top:449.2px;color:#d2d2d2;font-size:21px;">1</div>
<div class="f" style="left:1553.0px;top:491.0px;width:455.0px;height:34.5px;"></div>
<div class="t" style="left:1558.0px;top:497.2px;color:#d2d2d2;font-size:21px;">None (Image,RenderTexture)</div>
<svg class="abs" style="left:1978.5px;top:496px" width="26" height="26" viewBox="0 0 26 26"><path d="M12,22 L2,22 L2,2 L22,2 L22,12" fill="none" stroke="#cfcfcf" stroke-width="2"/><path d="M11.5,13 L11.5,18 M11.5,13 L16.5,13 M12,13.5 L20.5,21.5" fill="none" stroke="#cfcfcf" stroke-width="2"/></svg>
<div class="abs" style="left:1553.5px;top:541.5px;width:454.5px;height:31.5px;border-radius:7px;background:#fff;box-shadow:0 0 0 0.6px #777"></div>
<div class="abs" style="left:1556px;top:607.5px;width:301px;height:3px;background:#5f5f5f;border-radius:1.5px"></div>
<div class="abs" style="left:1578.0px;top:595.0px;width:23px;height:23px;border-radius:50%;background:#4e6db4"></div>
<div class="f" style="left:1877.0px;top:589.0px;width:131.0px;height:34.0px;"></div>
<div class="t" style="left:1889.5px;top:595.7px;color:#d2d2d2;font-size:21px;">0.078</div>
<div class="f" style="left:1553.0px;top:638.5px;width:455.0px;height:34.5px;"></div>
<div class="abs ntex" style="left:1559.5px;top:642px;width:29px;height:28.5px"></div>
<div class="t" style="left:1594.5px;top:644.2px;color:#d2d2d2;font-size:21px;">wallnormal</div>
<svg class="abs" style="left:1978.5px;top:643px" width="26" height="26" viewBox="0 0 26 26"><path d="M12,22 L2,22 L2,2 L22,2 L22,12" fill="none" stroke="#cfcfcf" stroke-width="2"/><path d="M11.5,13 L11.5,18 M11.5,13 L16.5,13 M12,13.5 L20.5,21.5" fill="none" stroke="#cfcfcf" stroke-width="2"/></svg>
<div class="abs" style="left:1556px;top:705.5px;width:301px;height:3px;background:#5f5f5f;border-radius:1.5px"></div>
<div class="abs" style="left:1556.8px;top:693.0px;width:23px;height:23px;border-radius:50%;background:#4e6db4"></div>
<div class="f" style="left:1877.0px;top:688.0px;width:131.0px;height:34.0px;"></div>
<div class="t" style="left:1889.5px;top:694.7px;color:#d2d2d2;font-size:21px;">0</div>
<div class="f" style="left:1553.0px;top:734.5px;width:219.0px;height:34.0px;"></div>
<div class="abs" style="left:1582.5px;top:735.5px;width:1px;height:32.0px;background:#1d1d1d"></div>
<div class="t" style="left:1559.5px;top:738.3px;font-size:19px;color:#c0c0c0">X</div>
<div class="t" style="left:1588.0px;top:740.2px;color:#d2d2d2;font-size:21px;">2</div>
<div class="f" style="left:1784.5px;top:734.5px;width:223.5px;height:34.0px;"></div>
<div class="abs" style="left:1813.0px;top:735.5px;width:1px;height:32.0px;background:#1d1d1d"></div>
<div class="t" style="left:1791.0px;top:738.3px;font-size:19px;color:#c0c0c0">Y</div>
<div class="t" style="left:1818.5px;top:740.2px;color:#d2d2d2;font-size:21px;">2</div>
<div class="f" style="left:1553.0px;top:777.5px;width:219.5px;height:34.0px;"></div>
<div class="abs" style="left:1582.5px;top:778.5px;width:1px;height:32.0px;background:#1d1d1d"></div>
<div class="t" style="left:1559.5px;top:781.3px;font-size:19px;color:#c0c0c0">Z</div>
<div class="t" style="left:1588.0px;top:783.2px;color:#d2d2d2;font-size:21px;">0</div>
<div class="f" style="left:1786.0px;top:777.5px;width:222.0px;height:34.0px;"></div>
<div class="abs" style="left:1814.5px;top:778.5px;width:1px;height:32.0px;background:#1d1d1d"></div>
<div class="t" style="left:1792.5px;top:781.3px;font-size:19px;color:#c0c0c0">W</div>
<div class="t" style="left:1820.0px;top:783.2px;color:#d2d2d2;font-size:21px;">0</div>
<div class="abs" style="left:1553px;top:829.5px;width:455px;height:26px;overflow:hidden"><div class="f" style="left:0;top:0;width:455px;height:40px"></div></div>
<div class="t" style="left:1560.0px;top:834.2px;color:#d2d2d2;font-size:21px;">OPAQUE</div>
<svg class="abs" style="left:1978px;top:837px" width="22" height="14" viewBox="0 0 22 14"><path d="M1.5,1.5 L19.5,1.5 L10.5,11 Z" fill="#c8c8c8"/></svg>
<div class="abs" style="left:1311px;top:621px;width:620px;height:66px;border:3px solid #e3202c"></div>
<svg class="abs" style="left:1945px;top:890px" width="65" height="32" viewBox="1945 890 65 32"><path d="M1962,897 L1971,901.5 L1971,911.5 L1962,916 L1953,911.5 L1953,901.5 Z M1953,901.5 L1962,906 L1971,901.5 M1962,906 L1962,916" fill="none" stroke="#8f8f8f" stroke-width="1.5" stroke-linejoin="round"/><circle cx="2012" cy="906" r="6.5" fill="none" stroke="#cfcfcf" stroke-width="1.8"/><path d="M2006,895 L2007.5,898 M2001,899 L2004,900.5 M2011,893 L2011,896" stroke="#cfcfcf" stroke-width="1.5"/></svg>
<!--/INSP-->
<!--MISC-->
<svg class="abs" style="left:10px;top:13px" width="28" height="30" viewBox="0 0 28 30">
<path d="M13,2 L24,8 L24,22 L13,28.5 L2,22 L2,8 Z" fill="#6a6fc6" stroke="#9da2e6" stroke-width="1"/>
<ellipse cx="13" cy="19.5" rx="6.3" ry="6.3" fill="#fff"/>
<ellipse cx="13" cy="13.5" rx="5" ry="4.3" fill="#fff"/>
<circle cx="8.3" cy="10" r="2.4" fill="#fff"/><circle cx="17.7" cy="10" r="2.4" fill="#fff"/>
<path d="M9.5,16.5 Q13,19 16.5,16.5" stroke="#6a6fc6" stroke-width="1.2" fill="none"/>
</svg>
<svg class="abs" style="left:141px;top:14.7px" width="30" height="28" viewBox="0 0 30 28">
<path d="M13,1.5 A11.5,11.5 0 1 0 23.5,20 L14.5,14 L22.5,6 A11.5,11.5 0 0 0 13,1.5 Z" fill="#8f93ee"/>
<circle cx="12.5" cy="7.5" r="1.5" fill="#fff"/>
<circle cx="18.5" cy="14.5" r="1.4" fill="#8f93ee"/><circle cx="24.5" cy="14.5" r="1.4" fill="#8f93ee"/>
</svg>
<svg class="abs" style="left:270px;top:14px" width="28" height="28" viewBox="270 14 28 28">
<g fill="#c6c8f6"><rect x="272.3" y="16.3" width="7.6" height="6.6" rx="1.6"/><rect x="288" y="16.3" width="7.8" height="6.6" rx="1.6"/><rect x="272.3" y="33" width="7.6" height="6.8" rx="1.6"/><rect x="288" y="33" width="7.8" height="6.8" rx="1.6" fill="#a9abd8"/></g>
<g stroke="#c6c8f6" stroke-width="1.3" fill="none"><path d="M279.9,19.6 L288,19.6 M279.9,36.4 L288,36.4 M291.7,22.9 L291.7,33"/><path d="M279.5,26.3 L287.5,26.3 L280.5,34" stroke-width="1.6"/></g>
<path d="M283.5,17.8 L286,19.6 L283.5,21.4 Z M284.5,34.6 L282,36.4 L284.5,38.2 Z" fill="#c6c8f6"/>
</svg>
<svg class="abs" style="left:426px;top:15px" width="28" height="26" viewBox="0 0 28 26">
<g stroke="#c6c8f6" stroke-width="2.2" fill="none" stroke-linecap="round">
<path d="M2.5,4.5 L16,4.5 M22,4.5 L25,4.5 M2.5,12.5 L8,12.5 M14,12.5 L25,12.5 M2.5,20.5 L16,20.5 M22,20.5 L25,20.5"/>
<ellipse cx="19" cy="4.5" rx="2.5" ry="3.2"/><ellipse cx="11" cy="12.5" rx="2.5" ry="3.2"/><ellipse cx="19" cy="20.5" rx="2.5" ry="3.2"/>
</g></svg>
<div class="abs" style="left:1256px;top:19.5px;width:13px;height:2.2px;background:#d0d0d0;box-shadow:0 6.8px 0 #d0d0d0,0 13.6px 0 #d0d0d0"></div>
<svg class="abs" style="left:10.5px;top:931px" width="28" height="26" viewBox="0 0 28 26">
<rect x="2" y="2.5" width="22" height="19.5" rx="2" fill="none" stroke="#c6c8f6" stroke-width="1.8"/>
<path d="M2.5,6.5 L23.5,6.5" stroke="#c6c8f6" stroke-width="1.5"/>
<path d="M5,10 L21,10 M5,14 L15,14 M5,18 L9,18 M11,18 L21,18" stroke="#c6c8f6" stroke-width="1.5"/>
</svg>
<svg class="abs" style="left:158px;top:929px" width="28" height="28" viewBox="0 0 28 28">
<path d="M20.5,8 A10,10 0 1 0 20.5,20" fill="none" stroke="#c6c8f6" stroke-width="2.2" stroke-linecap="round"/>
<path d="M11.5,8 L11.5,14.5 L15,16.5" fill="none" stroke="#c6c8f6" stroke-width="2" stroke-linecap="round"/>
<path d="M17.5,13 L24.5,13 M17.5,16.5 L21,16.5" stroke="#c6c8f6" stroke-width="1.8"/>
</svg>
<div class="abs" style="left:1256px;top:932px;width:13px;height:2.2px;background:#d0d0d0;box-shadow:0 7px 0 #d0d0d0,0 14px 0 #d0d0d0"></div>
<svg class="abs" style="left:1190px;top:970px" width="90" height="40" viewBox="1190 970 90 40">
<path d="M1200,982 L1200,1000 L1213,1000" fill="none" stroke="#c8c8c8" stroke-width="2.4"/>
<path d="M1203,977 L1212,977 L1212,984.5 L1218,984.5 L1218,996 L1203,996 Z" fill="#c4c4c4"/>
<path d="M1213,977 L1218,982.5 L1213,982.5 Z" fill="#c4c4c4"/>
<path d="M1252,986.5 L1252,979.5 Q1252,976.5 1255,976.5 Q1258,976.5 1258,979.5 L1258,986.5 L1266,986.5 Q1268.5,986.5 1268.5,989 Q1268.5,991.5 1266,991.5 L1244,991.5 Q1241.5,991.5 1241.5,989 Q1241.5,986.5 1244,986.5 Z" fill="none" stroke="#c8c8c8" stroke-width="1.8"/>
<path d="M1245.5,991.5 L1245.5,1001.5 L1265,1001.5 L1265,991.5 M1250,1001.5 L1250,996 M1255,1001.5 L1255,996 M1260,1001.5 L1260,996" fill="none" stroke="#c8c8c8" stroke-width="1.8"/>
</svg>
<div class="abs" style="left:1266px;top:1021px;width:16px;height:280px;border:1px solid #2c2c2c;border-radius:8px"></div>
<!--/MISC-->
<!--SPH-->
<svg class="abs" style="left:1570px;top:1030px" width="190" height="195" viewBox="1570 1030 190 195">
<defs><clipPath id="sph"><circle cx="1665.5" cy="1127.0" r="78.5"/></clipPath>
<radialGradient id="spec" cx="0.701" cy="0.430" r="0.42"><stop offset="0" stop-color="#fff" stop-opacity="1"/><stop offset="0.32" stop-color="#fff" stop-opacity="0.95"/><stop offset="0.62" stop-color="#fff" stop-opacity="0.4"/><stop offset="1" stop-color="#fff" stop-opacity="0"/></radialGradient>
<radialGradient id="rim" cx="0.5" cy="0.5" r="0.5"><stop offset="0.75" stop-color="#000" stop-opacity="0"/><stop offset="1" stop-color="#000" stop-opacity="0.35"/></radialGradient>
<filter id="snoise" x="0" y="0" width="100%" height="100%"><feTurbulence type="fractalNoise" baseFrequency="1.2" numOctaves="2" seed="2"/><feColorMatrix type="matrix" values="0 0 0 0 0  0 0 0 0 0  0 0 0 0 0  1.2 0 0 0 -0.55"/><feComposite in2="SourceGraphic" operator="in"/><feMerge><feMergeNode in="SourceGraphic"/><feMergeNode/></feMerge></filter>
</defs><g clip-path="url(#sph)"><circle cx="1665.5" cy="1127.0" r="78.5" fill="#555"/>
<g stroke="#3d3a38" stroke-width="1.6" stroke-linejoin="round" filter="url(#snoise)">
<polygon points="1636.7,1066.3 1628.2,1067.9 1620.6,1069.7 1614.1,1072.0 1608.9,1074.4 1608.9,1074.4 1612.3,1070.3 1616.0,1066.5 1620.1,1063.1 1624.4,1060.1 1624.4,1060.1 1628.2,1058.3 1632.9,1056.7 1638.4,1055.4 1644.6,1054.2 1644.6,1054.2 1642.4,1056.6 1640.3,1059.5 1638.4,1062.7 1636.7,1066.3" fill="rgb(74,62,60)"/>
<polygon points="1608.9,1162.7 1605.1,1165.4 1602.8,1168.2 1602.0,1171.1 1602.8,1174.0 1602.8,1174.0 1599.4,1169.3 1596.4,1164.3 1593.9,1159.0 1591.8,1153.6 1591.8,1153.6 1590.8,1150.2 1591.8,1146.8 1594.5,1143.5 1599.0,1140.3 1599.0,1140.3 1600.9,1146.1 1603.2,1151.8 1605.9,1157.3 1608.9,1162.7" fill="rgb(44,45,44)"/>
<polygon points="1665.5,1202.1 1665.5,1202.1 1665.5,1202.1 1665.5,1202.1 1665.5,1202.1 1665.5,1202.1 1671.6,1201.6 1677.6,1200.6 1683.6,1199.2 1689.5,1197.3 1689.5,1197.3 1689.8,1198.4 1689.5,1199.5 1688.6,1200.6 1687.1,1201.6 1687.1,1201.6 1681.8,1202.4 1676.4,1202.8 1671.0,1202.7 1665.5,1202.1" fill="rgb(44,45,44)"/>
<polygon points="1739.2,1100.4 1736.5,1097.1 1732.0,1093.9 1725.9,1091.0 1718.3,1088.4 1718.3,1088.4 1716.8,1083.3 1715.0,1078.5 1712.8,1073.9 1710.4,1069.7 1710.4,1069.7 1716.9,1072.0 1722.1,1074.4 1725.9,1077.1 1728.2,1080.0 1728.2,1080.0 1731.6,1084.7 1734.6,1089.7 1737.1,1095.0 1739.2,1100.4" fill="rgb(100,84,81)"/>
<polygon points="1665.5,1202.1 1665.5,1202.1 1665.5,1202.1 1665.5,1202.1 1665.5,1202.1 1665.5,1202.1 1661.1,1203.1 1656.8,1203.7 1652.5,1203.8 1648.3,1203.4 1648.3,1203.4 1645.9,1202.6 1643.9,1201.6 1642.4,1200.6 1641.5,1199.5 1641.5,1199.5 1647.4,1200.8 1653.4,1201.7 1659.4,1202.1 1665.5,1202.1" fill="rgb(44,45,44)"/>
<polygon points="1599.0,1140.3 1594.5,1143.5 1591.8,1146.8 1590.8,1150.2 1591.8,1153.6 1591.8,1153.6 1590.1,1148.0 1588.9,1142.3 1588.2,1136.5 1588.0,1130.6 1588.0,1130.6 1587.0,1127.0 1588.0,1123.4 1590.8,1119.9 1595.6,1116.6 1595.6,1116.6 1595.8,1122.5 1596.4,1128.5 1597.5,1134.4 1599.0,1140.3" fill="rgb(74,52,50)"/>
<polygon points="1687.1,1201.6 1688.6,1200.6 1689.5,1199.5 1689.8,1198.4 1689.5,1197.3 1689.5,1197.3 1695.2,1195.0 1700.7,1192.3 1706.0,1189.1 1711.1,1185.6 1711.1,1185.6 1711.6,1187.7 1711.1,1189.8 1709.4,1191.9 1706.6,1193.9 1706.6,1193.9 1702.0,1196.5 1697.3,1198.6 1692.3,1200.3 1687.1,1201.6" fill="rgb(74,52,50)"/>
<polygon points="1665.5,1202.1 1665.5,1202.1 1665.5,1202.1 1665.5,1202.1 1665.5,1202.1 1665.5,1202.1 1671.0,1202.7 1676.4,1202.8 1681.8,1202.4 1687.1,1201.6 1687.1,1201.6 1685.1,1202.6 1682.7,1203.4 1679.8,1204.1 1676.5,1204.7 1676.5,1204.7 1673.8,1204.8 1671.1,1204.3 1668.3,1203.4 1665.5,1202.1" fill="rgb(69,57,56)"/>
<polygon points="1672.7,1052.9 1665.5,1052.8 1658.3,1052.9 1651.2,1053.4 1644.6,1054.2 1644.6,1054.2 1646.9,1052.3 1649.3,1050.8 1651.9,1049.8 1654.5,1049.3 1654.5,1049.3 1658.0,1048.9 1661.7,1048.6 1665.5,1048.5 1669.3,1048.6 1669.3,1048.6 1670.2,1049.0 1671.1,1049.8 1671.9,1051.1 1672.7,1052.9" fill="rgb(100,84,80)"/>
<polygon points="1665.5,1202.1 1665.5,1202.1 1665.5,1202.1 1665.5,1202.1 1665.5,1202.1 1665.5,1202.1 1664.5,1203.6 1663.6,1204.7 1662.6,1205.3 1661.7,1205.4 1661.7,1205.4 1658.0,1205.1 1654.5,1204.7 1651.2,1204.1 1648.3,1203.4 1648.3,1203.4 1652.5,1203.8 1656.8,1203.7 1661.1,1203.1 1665.5,1202.1" fill="rgb(74,62,60)"/>
<polygon points="1665.5,1202.1 1665.5,1202.1 1665.5,1202.1 1665.5,1202.1 1665.5,1202.1 1665.5,1202.1 1668.3,1203.4 1671.1,1204.3 1673.8,1204.8 1676.5,1204.7 1676.5,1204.7 1673.0,1205.1 1669.3,1205.4 1665.5,1205.5 1661.7,1205.4 1661.7,1205.4 1662.6,1205.3 1663.6,1204.7 1664.5,1203.6 1665.5,1202.1" fill="rgb(46,46,45)"/>
<polygon points="1698.1,1056.7 1692.6,1055.4 1686.4,1054.2 1679.8,1053.4 1672.7,1052.9 1672.7,1052.9 1671.9,1051.1 1671.1,1049.8 1670.2,1049.0 1669.3,1048.6 1669.3,1048.6 1673.0,1048.9 1676.5,1049.3 1679.8,1049.9 1682.7,1050.6 1682.7,1050.6 1686.7,1051.4 1690.7,1052.7 1694.5,1054.5 1698.1,1056.7" fill="rgb(66,66,65)"/>
<polygon points="1595.6,1116.6 1590.8,1119.9 1588.0,1123.4 1587.0,1127.0 1588.0,1130.6 1588.0,1130.6 1588.2,1124.7 1588.9,1118.8 1590.1,1113.0 1591.8,1107.2 1591.8,1107.2 1590.8,1103.8 1591.8,1100.4 1594.5,1097.1 1599.0,1093.9 1599.0,1093.9 1597.5,1099.3 1596.4,1105.0 1595.8,1110.7 1595.6,1116.6" fill="rgb(46,46,45)"/>
<polygon points="1706.6,1193.9 1709.4,1191.9 1711.1,1189.8 1711.6,1187.7 1711.1,1185.6 1711.1,1185.6 1715.9,1181.8 1720.3,1177.5 1724.5,1173.0 1728.2,1168.2 1728.2,1168.2 1729.0,1171.1 1728.2,1174.0 1725.9,1176.9 1722.1,1179.6 1722.1,1179.6 1718.7,1183.7 1715.0,1187.5 1710.9,1190.9 1706.6,1193.9" fill="rgb(40,41,40)"/>
<polygon points="1728.2,1080.0 1725.9,1077.1 1722.1,1074.4 1716.9,1072.0 1710.4,1069.7 1710.4,1069.7 1707.7,1065.9 1704.8,1062.4 1701.5,1059.4 1698.1,1056.7 1698.1,1056.7 1702.8,1058.3 1706.6,1060.1 1709.4,1062.1 1711.1,1064.2 1711.1,1064.2 1715.9,1067.6 1720.3,1071.4 1724.5,1075.5 1728.2,1080.0" fill="rgb(65,65,65)"/>
<polygon points="1641.5,1199.5 1642.4,1200.6 1643.9,1201.6 1645.9,1202.6 1648.3,1203.4 1648.3,1203.4 1644.3,1202.6 1640.3,1201.3 1636.5,1199.5 1632.9,1197.3 1632.9,1197.3 1628.2,1195.7 1624.4,1193.9 1621.6,1191.9 1619.9,1189.8 1619.9,1189.8 1625.0,1192.9 1630.3,1195.5 1635.8,1197.7 1641.5,1199.5" fill="rgb(74,52,50)"/>
<polygon points="1644.6,1054.2 1638.4,1055.4 1632.9,1056.7 1628.2,1058.3 1624.4,1060.1 1624.4,1060.1 1629.0,1057.5 1633.7,1055.4 1638.7,1053.7 1643.9,1052.4 1643.9,1052.4 1645.9,1051.4 1648.3,1050.6 1651.2,1049.9 1654.5,1049.3 1654.5,1049.3 1651.9,1049.8 1649.3,1050.8 1646.9,1052.3 1644.6,1054.2" fill="rgb(55,55,55)"/>
<polygon points="1599.0,1093.9 1594.5,1097.1 1591.8,1100.4 1590.8,1103.8 1591.8,1107.2 1591.8,1107.2 1593.9,1101.6 1596.4,1096.1 1599.4,1090.8 1602.8,1085.8 1602.8,1085.8 1602.0,1082.9 1602.8,1080.0 1605.1,1077.1 1608.9,1074.4 1608.9,1074.4 1605.9,1078.9 1603.2,1083.6 1600.9,1088.6 1599.0,1093.9" fill="rgb(69,57,56)"/>
<polygon points="1722.1,1179.6 1725.9,1176.9 1728.2,1174.0 1729.0,1171.1 1728.2,1168.2 1728.2,1168.2 1731.6,1163.2 1734.6,1157.9 1737.1,1152.4 1739.2,1146.8 1739.2,1146.8 1740.2,1150.2 1739.2,1153.6 1736.5,1156.9 1732.0,1160.1 1732.0,1160.1 1730.1,1165.4 1727.8,1170.4 1725.1,1175.1 1722.1,1179.6" fill="rgb(77,66,64)"/>
<polygon points="1676.5,1204.7 1679.8,1204.1 1682.7,1203.4 1685.1,1202.6 1687.1,1201.6 1687.1,1201.6 1692.3,1200.3 1697.3,1198.6 1702.0,1196.5 1706.6,1193.9 1706.6,1193.9 1702.8,1195.7 1698.1,1197.3 1692.6,1198.6 1686.4,1199.8 1686.4,1199.8 1684.1,1201.7 1681.7,1203.2 1679.1,1204.2 1676.5,1204.7" fill="rgb(42,42,42)"/>
<polygon points="1711.1,1064.2 1709.4,1062.1 1706.6,1060.1 1702.8,1058.3 1698.1,1056.7 1698.1,1056.7 1694.5,1054.5 1690.7,1052.7 1686.7,1051.4 1682.7,1050.6 1682.7,1050.6 1685.1,1051.4 1687.1,1052.4 1688.6,1053.4 1689.5,1054.5 1689.5,1054.5 1695.2,1056.3 1700.7,1058.5 1706.0,1061.1 1711.1,1064.2" fill="rgb(115,94,93)"/>
<polygon points="1619.9,1189.8 1621.6,1191.9 1624.4,1193.9 1628.2,1195.7 1632.9,1197.3 1632.9,1197.3 1629.5,1194.6 1626.2,1191.6 1623.3,1188.1 1620.6,1184.3 1620.6,1184.3 1614.1,1182.0 1608.9,1179.6 1605.1,1176.9 1602.8,1174.0 1602.8,1174.0 1606.5,1178.5 1610.7,1182.6 1615.1,1186.4 1619.9,1189.8" fill="rgb(40,41,40)"/>
<polygon points="1608.9,1074.4 1605.1,1077.1 1602.8,1080.0 1602.0,1082.9 1602.8,1085.8 1602.8,1085.8 1606.5,1081.0 1610.7,1076.5 1615.1,1072.2 1619.9,1068.4 1619.9,1068.4 1619.4,1066.3 1619.9,1064.2 1621.6,1062.1 1624.4,1060.1 1624.4,1060.1 1620.1,1063.1 1616.0,1066.5 1612.3,1070.3 1608.9,1074.4" fill="rgb(47,48,47)"/>
<polygon points="1732.0,1160.1 1736.5,1156.9 1739.2,1153.6 1740.2,1150.2 1739.2,1146.8 1739.2,1146.8 1740.9,1141.0 1742.1,1135.2 1742.8,1129.3 1743.0,1123.4 1743.0,1123.4 1744.0,1127.0 1743.0,1130.6 1740.2,1134.1 1735.4,1137.4 1735.4,1137.4 1735.2,1143.3 1734.6,1149.0 1733.5,1154.7 1732.0,1160.1" fill="rgb(55,57,55)"/>
<polygon points="1648.3,1203.4 1651.2,1204.1 1654.5,1204.7 1658.0,1205.1 1661.7,1205.4 1661.7,1205.4 1660.8,1205.0 1659.9,1204.2 1659.1,1202.9 1658.3,1201.1 1658.3,1201.1 1651.2,1200.6 1644.6,1199.8 1638.4,1198.6 1632.9,1197.3 1632.9,1197.3 1636.5,1199.5 1640.3,1201.3 1644.3,1202.6 1648.3,1203.4" fill="rgb(44,45,44)"/>
<polygon points="1669.3,1048.6 1665.5,1048.5 1661.7,1048.6 1658.0,1048.9 1654.5,1049.3 1654.5,1049.3 1657.2,1049.2 1659.9,1049.7 1662.7,1050.6 1665.5,1051.9 1665.5,1051.9 1665.5,1051.9 1665.5,1051.9 1665.5,1051.9 1665.5,1051.9 1665.5,1051.9 1666.5,1050.4 1667.4,1049.3 1668.4,1048.7 1669.3,1048.6" fill="rgb(68,68,68)"/>
<polygon points="1682.7,1050.6 1679.8,1049.9 1676.5,1049.3 1673.0,1048.9 1669.3,1048.6 1669.3,1048.6 1668.4,1048.7 1667.4,1049.3 1666.5,1050.4 1665.5,1051.9 1665.5,1051.9 1665.5,1051.9 1665.5,1051.9 1665.5,1051.9 1665.5,1051.9 1665.5,1051.9 1669.9,1050.9 1674.2,1050.3 1678.5,1050.2 1682.7,1050.6" fill="rgb(123,103,99)"/>
<polygon points="1661.7,1205.4 1665.5,1205.5 1669.3,1205.4 1673.0,1205.1 1676.5,1204.7 1676.5,1204.7 1679.1,1204.2 1681.7,1203.2 1684.1,1201.7 1686.4,1199.8 1686.4,1199.8 1679.8,1200.6 1672.7,1201.1 1665.5,1201.2 1658.3,1201.1 1658.3,1201.1 1659.1,1202.9 1659.9,1204.2 1660.8,1205.0 1661.7,1205.4" fill="rgb(74,52,50)"/>
<polygon points="1654.5,1049.3 1651.2,1049.9 1648.3,1050.6 1645.9,1051.4 1643.9,1052.4 1643.9,1052.4 1649.2,1051.6 1654.6,1051.2 1660.0,1051.3 1665.5,1051.9 1665.5,1051.9 1665.5,1051.9 1665.5,1051.9 1665.5,1051.9 1665.5,1051.9 1665.5,1051.9 1662.7,1050.6 1659.9,1049.7 1657.2,1049.2 1654.5,1049.3" fill="rgb(119,84,81)"/>
<polygon points="1624.4,1060.1 1621.6,1062.1 1619.9,1064.2 1619.4,1066.3 1619.9,1068.4 1619.9,1068.4 1625.0,1064.9 1630.3,1061.7 1635.8,1059.0 1641.5,1056.7 1641.5,1056.7 1641.2,1055.6 1641.5,1054.5 1642.4,1053.4 1643.9,1052.4 1643.9,1052.4 1638.7,1053.7 1633.7,1055.4 1629.0,1057.5 1624.4,1060.1" fill="rgb(106,75,72)"/>
<polygon points="1735.4,1137.4 1740.2,1134.1 1743.0,1130.6 1744.0,1127.0 1743.0,1123.4 1743.0,1123.4 1742.8,1117.5 1742.1,1111.7 1740.9,1106.0 1739.2,1100.4 1739.2,1100.4 1740.2,1103.8 1739.2,1107.2 1736.5,1110.5 1732.0,1113.7 1732.0,1113.7 1733.5,1119.6 1734.6,1125.5 1735.2,1131.5 1735.4,1137.4" fill="rgb(119,84,80)"/>
<polygon points="1689.5,1054.5 1688.6,1053.4 1687.1,1052.4 1685.1,1051.4 1682.7,1050.6 1682.7,1050.6 1678.5,1050.2 1674.2,1050.3 1669.9,1050.9 1665.5,1051.9 1665.5,1051.9 1665.5,1051.9 1665.5,1051.9 1665.5,1051.9 1665.5,1051.9 1665.5,1051.9 1671.6,1051.9 1677.6,1052.3 1683.6,1053.2 1689.5,1054.5" fill="rgb(79,79,77)"/>
<polygon points="1602.8,1174.0 1605.1,1176.9 1608.9,1179.6 1614.1,1182.0 1620.6,1184.3 1620.6,1184.3 1618.2,1180.1 1616.0,1175.5 1614.2,1170.7 1612.7,1165.6 1612.7,1165.6 1605.1,1163.0 1599.0,1160.1 1594.5,1156.9 1591.8,1153.6 1591.8,1153.6 1593.9,1159.0 1596.4,1164.3 1599.4,1169.3 1602.8,1174.0" fill="rgb(70,60,58)"/>
<polygon points="1643.9,1052.4 1642.4,1053.4 1641.5,1054.5 1641.2,1055.6 1641.5,1056.7 1641.5,1056.7 1647.4,1054.8 1653.4,1053.4 1659.4,1052.4 1665.5,1051.9 1665.5,1051.9 1665.5,1051.9 1665.5,1051.9 1665.5,1051.9 1665.5,1051.9 1665.5,1051.9 1660.0,1051.3 1654.6,1051.2 1649.2,1051.6 1643.9,1052.4" fill="rgb(70,70,70)"/>
<polygon points="1732.0,1113.7 1736.5,1110.5 1739.2,1107.2 1740.2,1103.8 1739.2,1100.4 1739.2,1100.4 1737.1,1095.0 1734.6,1089.7 1731.6,1084.7 1728.2,1080.0 1728.2,1080.0 1729.0,1082.9 1728.2,1085.8 1725.9,1088.6 1722.1,1091.3 1722.1,1091.3 1725.1,1096.7 1727.8,1102.2 1730.1,1107.9 1732.0,1113.7" fill="rgb(75,75,75)"/>
<polygon points="1686.4,1199.8 1692.6,1198.6 1698.1,1197.3 1702.8,1195.7 1706.6,1193.9 1706.6,1193.9 1710.9,1190.9 1715.0,1187.5 1718.7,1183.7 1722.1,1179.6 1722.1,1179.6 1716.9,1182.0 1710.4,1184.3 1702.8,1186.1 1694.3,1187.7 1694.3,1187.7 1692.6,1191.3 1690.7,1194.5 1688.6,1197.4 1686.4,1199.8" fill="rgb(77,54,52)"/>
<polygon points="1687.1,1058.8 1688.6,1057.8 1689.5,1056.7 1689.8,1055.6 1689.5,1054.5 1689.5,1054.5 1683.6,1053.2 1677.6,1052.3 1671.6,1051.9 1665.5,1051.9 1665.5,1051.9 1665.5,1051.9 1665.5,1051.9 1665.5,1051.9 1665.5,1051.9 1665.5,1051.9 1671.0,1053.0 1676.4,1054.5 1681.8,1056.4 1687.1,1058.8" fill="rgb(138,116,110)"/>
<polygon points="1722.1,1091.3 1725.9,1088.6 1728.2,1085.8 1729.0,1082.9 1728.2,1080.0 1728.2,1080.0 1724.5,1075.5 1720.3,1071.4 1715.9,1067.6 1711.1,1064.2 1711.1,1064.2 1711.6,1066.3 1711.1,1068.4 1709.4,1070.4 1706.6,1072.4 1706.6,1072.4 1710.9,1076.7 1715.0,1081.3 1718.7,1086.2 1722.1,1091.3" fill="rgb(139,98,94)"/>
<polygon points="1706.6,1072.4 1709.4,1070.4 1711.1,1068.4 1711.6,1066.3 1711.1,1064.2 1711.1,1064.2 1706.0,1061.1 1700.7,1058.5 1695.2,1056.3 1689.5,1054.5 1689.5,1054.5 1689.8,1055.6 1689.5,1056.7 1688.6,1057.8 1687.1,1058.8 1687.1,1058.8 1692.3,1061.6 1697.3,1064.8 1702.0,1068.4 1706.6,1072.4" fill="rgb(86,86,84)"/>
<polygon points="1641.5,1056.7 1642.4,1057.8 1643.9,1058.8 1645.9,1059.8 1648.3,1060.6 1648.3,1060.6 1652.5,1057.8 1656.8,1055.4 1661.1,1053.4 1665.5,1051.9 1665.5,1051.9 1665.5,1051.9 1665.5,1051.9 1665.5,1051.9 1665.5,1051.9 1665.5,1051.9 1659.4,1052.4 1653.4,1053.4 1647.4,1054.8 1641.5,1056.7" fill="rgb(128,107,104)"/>
<polygon points="1591.8,1153.6 1594.5,1156.9 1599.0,1160.1 1605.1,1163.0 1612.7,1165.6 1612.7,1165.6 1611.5,1160.3 1610.7,1154.8 1610.2,1149.1 1610.0,1143.2 1610.0,1143.2 1602.0,1140.5 1595.6,1137.4 1590.8,1134.1 1588.0,1130.6 1588.0,1130.6 1588.2,1136.5 1588.9,1142.3 1590.1,1148.0 1591.8,1153.6" fill="rgb(46,46,45)"/>
<polygon points="1676.5,1061.9 1679.8,1061.3 1682.7,1060.6 1685.1,1059.8 1687.1,1058.8 1687.1,1058.8 1681.8,1056.4 1676.4,1054.5 1671.0,1053.0 1665.5,1051.9 1665.5,1051.9 1665.5,1051.9 1665.5,1051.9 1665.5,1051.9 1665.5,1051.9 1665.5,1051.9 1668.3,1053.8 1671.1,1056.1 1673.8,1058.8 1676.5,1061.9" fill="rgb(81,83,81)"/>
<polygon points="1632.9,1197.3 1638.4,1198.6 1644.6,1199.8 1651.2,1200.6 1658.3,1201.1 1658.3,1201.1 1657.5,1198.8 1656.8,1196.1 1656.2,1193.0 1655.6,1189.5 1655.6,1189.5 1645.9,1188.8 1636.7,1187.7 1628.2,1186.1 1620.6,1184.3 1620.6,1184.3 1623.3,1188.1 1626.2,1191.6 1629.5,1194.6 1632.9,1197.3" fill="rgb(70,60,58)"/>
<polygon points="1648.3,1060.6 1651.2,1061.3 1654.5,1061.9 1658.0,1062.3 1661.7,1062.6 1661.7,1062.6 1662.6,1059.3 1663.6,1056.4 1664.5,1053.9 1665.5,1051.9 1665.5,1051.9 1665.5,1051.9 1665.5,1051.9 1665.5,1051.9 1665.5,1051.9 1665.5,1051.9 1661.1,1053.4 1656.8,1055.4 1652.5,1057.8 1648.3,1060.6" fill="rgb(77,77,77)"/>
<polygon points="1661.7,1062.6 1665.5,1062.7 1669.3,1062.6 1673.0,1062.3 1676.5,1061.9 1676.5,1061.9 1673.8,1058.8 1671.1,1056.1 1668.3,1053.8 1665.5,1051.9 1665.5,1051.9 1665.5,1051.9 1665.5,1051.9 1665.5,1051.9 1665.5,1051.9 1665.5,1051.9 1664.5,1053.9 1663.6,1056.4 1662.6,1059.3 1661.7,1062.6" fill="rgb(129,111,107)"/>
<polygon points="1619.9,1068.4 1621.6,1070.4 1624.4,1072.4 1628.2,1074.2 1632.9,1075.8 1632.9,1075.8 1636.5,1071.5 1640.3,1067.5 1644.3,1063.9 1648.3,1060.6 1648.3,1060.6 1645.9,1059.8 1643.9,1058.8 1642.4,1057.8 1641.5,1056.7 1641.5,1056.7 1635.8,1059.0 1630.3,1061.7 1625.0,1064.9 1619.9,1068.4" fill="rgb(66,68,66)"/>
<polygon points="1658.3,1201.1 1665.5,1201.2 1672.7,1201.1 1679.8,1200.6 1686.4,1199.8 1686.4,1199.8 1688.6,1197.4 1690.7,1194.5 1692.6,1191.3 1694.3,1187.7 1694.3,1187.7 1685.1,1188.8 1675.4,1189.5 1665.5,1189.7 1655.6,1189.5 1655.6,1189.5 1656.2,1193.0 1656.8,1196.1 1657.5,1198.8 1658.3,1201.1" fill="rgb(44,46,44)"/>
<polygon points="1694.3,1187.7 1702.8,1186.1 1710.4,1184.3 1716.9,1182.0 1722.1,1179.6 1722.1,1179.6 1725.1,1175.1 1727.8,1170.4 1730.1,1165.4 1732.0,1160.1 1732.0,1160.1 1725.9,1163.0 1718.3,1165.6 1709.4,1167.9 1699.4,1169.6 1699.4,1169.6 1698.4,1174.6 1697.3,1179.3 1695.9,1183.7 1694.3,1187.7" fill="rgb(55,56,55)"/>
<polygon points="1588.0,1130.6 1590.8,1134.1 1595.6,1137.4 1602.0,1140.5 1610.0,1143.2 1610.0,1143.2 1610.2,1137.3 1610.7,1131.3 1611.5,1125.3 1612.7,1119.2 1612.7,1119.2 1605.1,1116.6 1599.0,1113.7 1594.5,1110.5 1591.8,1107.2 1591.8,1107.2 1590.1,1113.0 1588.9,1118.8 1588.2,1124.7 1588.0,1130.6" fill="rgb(76,62,61)"/>
<polygon points="1602.8,1085.8 1605.1,1088.6 1608.9,1091.3 1614.1,1093.8 1620.6,1096.0 1620.6,1096.0 1623.3,1090.6 1626.2,1085.4 1629.5,1080.5 1632.9,1075.8 1632.9,1075.8 1628.2,1074.2 1624.4,1072.4 1621.6,1070.4 1619.9,1068.4 1619.9,1068.4 1615.1,1072.2 1610.7,1076.5 1606.5,1081.0 1602.8,1085.8" fill="rgb(105,91,87)"/>
<polygon points="1591.8,1107.2 1594.5,1110.5 1599.0,1113.7 1605.1,1116.6 1612.7,1119.2 1612.7,1119.2 1614.2,1113.3 1616.0,1107.4 1618.2,1101.6 1620.6,1096.0 1620.6,1096.0 1614.1,1093.8 1608.9,1091.3 1605.1,1088.6 1602.8,1085.8 1602.8,1085.8 1599.4,1090.8 1596.4,1096.1 1593.9,1101.6 1591.8,1107.2" fill="rgb(57,59,57)"/>
<polygon points="1686.4,1078.3 1692.6,1077.2 1698.1,1075.8 1702.8,1074.2 1706.6,1072.4 1706.6,1072.4 1702.0,1068.4 1697.3,1064.8 1692.3,1061.6 1687.1,1058.8 1687.1,1058.8 1685.1,1059.8 1682.7,1060.6 1679.8,1061.3 1676.5,1061.9 1676.5,1061.9 1679.1,1065.5 1681.7,1069.4 1684.1,1073.7 1686.4,1078.3" fill="rgb(138,114,112)"/>
<polygon points="1699.4,1169.6 1709.4,1167.9 1718.3,1165.6 1725.9,1163.0 1732.0,1160.1 1732.0,1160.1 1733.5,1154.7 1734.6,1149.0 1735.2,1143.3 1735.4,1137.4 1735.4,1137.4 1729.0,1140.5 1721.0,1143.2 1711.6,1145.6 1701.1,1147.4 1701.1,1147.4 1701.0,1153.3 1700.7,1158.9 1700.2,1164.4 1699.4,1169.6" fill="rgb(114,94,92)"/>
<polygon points="1620.6,1184.3 1628.2,1186.1 1636.7,1187.7 1645.9,1188.8 1655.6,1189.5 1655.6,1189.5 1655.0,1185.6 1654.6,1181.3 1654.2,1176.7 1653.8,1171.8 1653.8,1171.8 1642.4,1171.0 1631.6,1169.6 1621.6,1167.9 1612.7,1165.6 1612.7,1165.6 1614.2,1170.7 1616.0,1175.5 1618.2,1180.1 1620.6,1184.3" fill="rgb(46,46,46)"/>
<polygon points="1632.9,1075.8 1638.4,1077.2 1644.6,1078.3 1651.2,1079.1 1658.3,1079.6 1658.3,1079.6 1659.1,1074.8 1659.9,1070.4 1660.8,1066.3 1661.7,1062.6 1661.7,1062.6 1658.0,1062.3 1654.5,1061.9 1651.2,1061.3 1648.3,1060.6 1648.3,1060.6 1644.3,1063.9 1640.3,1067.5 1636.5,1071.5 1632.9,1075.8" fill="rgb(139,98,94)"/>
<polygon points="1694.3,1099.4 1702.8,1097.9 1710.4,1096.0 1716.9,1093.8 1722.1,1091.3 1722.1,1091.3 1718.7,1086.2 1715.0,1081.3 1710.9,1076.7 1706.6,1072.4 1706.6,1072.4 1702.8,1074.2 1698.1,1075.8 1692.6,1077.2 1686.4,1078.3 1686.4,1078.3 1688.6,1083.2 1690.7,1088.4 1692.6,1093.8 1694.3,1099.4" fill="rgb(88,88,88)"/>
<polygon points="1658.3,1079.6 1665.5,1079.8 1672.7,1079.6 1679.8,1079.1 1686.4,1078.3 1686.4,1078.3 1684.1,1073.7 1681.7,1069.4 1679.1,1065.5 1676.5,1061.9 1676.5,1061.9 1673.0,1062.3 1669.3,1062.6 1665.5,1062.7 1661.7,1062.6 1661.7,1062.6 1660.8,1066.3 1659.9,1070.4 1659.1,1074.8 1658.3,1079.6" fill="rgb(85,85,85)"/>
<polygon points="1655.6,1189.5 1665.5,1189.7 1675.4,1189.5 1685.1,1188.8 1694.3,1187.7 1694.3,1187.7 1695.9,1183.7 1697.3,1179.3 1698.4,1174.6 1699.4,1169.6 1699.4,1169.6 1688.6,1171.0 1677.2,1171.8 1665.5,1172.0 1653.8,1171.8 1653.8,1171.8 1654.2,1176.7 1654.6,1181.3 1655.0,1185.6 1655.6,1189.5" fill="rgb(103,87,83)"/>
<polygon points="1701.1,1147.4 1711.6,1145.6 1721.0,1143.2 1729.0,1140.5 1735.4,1137.4 1735.4,1137.4 1735.2,1131.5 1734.6,1125.5 1733.5,1119.6 1732.0,1113.7 1732.0,1113.7 1725.9,1116.6 1718.3,1119.2 1709.4,1121.5 1699.4,1123.3 1699.4,1123.3 1700.2,1129.4 1700.7,1135.5 1701.0,1141.5 1701.1,1147.4" fill="rgb(82,84,82)"/>
<polygon points="1699.4,1123.3 1709.4,1121.5 1718.3,1119.2 1725.9,1116.6 1732.0,1113.7 1732.0,1113.7 1730.1,1107.9 1727.8,1102.2 1725.1,1096.7 1722.1,1091.3 1722.1,1091.3 1716.9,1093.8 1710.4,1096.0 1702.8,1097.9 1694.3,1099.4 1694.3,1099.4 1695.9,1105.2 1697.3,1111.1 1698.4,1117.2 1699.4,1123.3" fill="rgb(155,131,124)"/>
<polygon points="1612.7,1165.6 1621.6,1167.9 1631.6,1169.6 1642.4,1171.0 1653.8,1171.8 1653.8,1171.8 1653.6,1166.6 1653.4,1161.1 1653.3,1155.5 1653.2,1149.7 1653.2,1149.7 1641.2,1148.8 1629.9,1147.4 1619.4,1145.6 1610.0,1143.2 1610.0,1143.2 1610.2,1149.1 1610.7,1154.8 1611.5,1160.3 1612.7,1165.6" fill="rgb(103,87,82)"/>
<polygon points="1620.6,1096.0 1628.2,1097.9 1636.7,1099.4 1645.9,1100.5 1655.6,1101.2 1655.6,1101.2 1656.2,1095.5 1656.8,1089.9 1657.5,1084.6 1658.3,1079.6 1658.3,1079.6 1651.2,1079.1 1644.6,1078.3 1638.4,1077.2 1632.9,1075.8 1632.9,1075.8 1629.5,1080.5 1626.2,1085.4 1623.3,1090.6 1620.6,1096.0" fill="rgb(79,79,79)"/>
<polygon points="1655.6,1101.2 1665.5,1101.4 1675.4,1101.2 1685.1,1100.5 1694.3,1099.4 1694.3,1099.4 1692.6,1093.8 1690.7,1088.4 1688.6,1083.2 1686.4,1078.3 1686.4,1078.3 1679.8,1079.1 1672.7,1079.6 1665.5,1079.8 1658.3,1079.6 1658.3,1079.6 1657.5,1084.6 1656.8,1089.9 1656.2,1095.5 1655.6,1101.2" fill="rgb(142,117,115)"/>
<polygon points="1653.8,1171.8 1665.5,1172.0 1677.2,1171.8 1688.6,1171.0 1699.4,1169.6 1699.4,1169.6 1700.2,1164.4 1700.7,1158.9 1701.0,1153.3 1701.1,1147.4 1701.1,1147.4 1689.8,1148.8 1677.8,1149.7 1665.5,1150.0 1653.2,1149.7 1653.2,1149.7 1653.3,1155.5 1653.4,1161.1 1653.6,1166.6 1653.8,1171.8" fill="rgb(70,70,70)"/>
<polygon points="1610.0,1143.2 1619.4,1145.6 1629.9,1147.4 1641.2,1148.8 1653.2,1149.7 1653.2,1149.7 1653.3,1143.7 1653.4,1137.6 1653.6,1131.5 1653.8,1125.4 1653.8,1125.4 1642.4,1124.6 1631.6,1123.3 1621.6,1121.5 1612.7,1119.2 1612.7,1119.2 1611.5,1125.3 1610.7,1131.3 1610.2,1137.3 1610.0,1143.2" fill="rgb(69,70,69)"/>
<polygon points="1612.7,1119.2 1621.6,1121.5 1631.6,1123.3 1642.4,1124.6 1653.8,1125.4 1653.8,1125.4 1654.2,1119.2 1654.6,1113.1 1655.0,1107.1 1655.6,1101.2 1655.6,1101.2 1645.9,1100.5 1636.7,1099.4 1628.2,1097.9 1620.6,1096.0 1620.6,1096.0 1618.2,1101.6 1616.0,1107.4 1614.2,1113.3 1612.7,1119.2" fill="rgb(134,113,107)"/>
<polygon points="1653.8,1125.4 1665.5,1125.6 1677.2,1125.4 1688.6,1124.6 1699.4,1123.3 1699.4,1123.3 1698.4,1117.2 1697.3,1111.1 1695.9,1105.2 1694.3,1099.4 1694.3,1099.4 1685.1,1100.5 1675.4,1101.2 1665.5,1101.4 1655.6,1101.2 1655.6,1101.2 1655.0,1107.1 1654.6,1113.1 1654.2,1119.2 1653.8,1125.4" fill="rgb(92,92,90)"/>
<polygon points="1653.2,1149.7 1665.5,1150.0 1677.8,1149.7 1689.8,1148.8 1701.1,1147.4 1701.1,1147.4 1701.0,1141.5 1700.7,1135.5 1700.2,1129.4 1699.4,1123.3 1699.4,1123.3 1688.6,1124.6 1677.2,1125.4 1665.5,1125.6 1653.8,1125.4 1653.8,1125.4 1653.6,1131.5 1653.4,1137.6 1653.3,1143.7 1653.2,1149.7" fill="rgb(143,121,115)"/>
</g>
<circle cx="1665.5" cy="1127.0" r="78.5" fill="url(#rim)"/>
<circle cx="1665.5" cy="1127.0" r="78.5" fill="url(#spec)"/>
</g></svg>
<!--/SPH-->
</body></html>
